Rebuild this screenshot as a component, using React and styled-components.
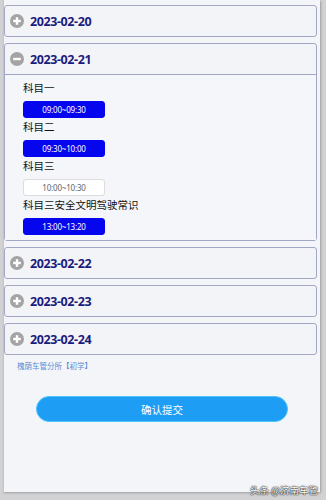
import styled, { createGlobalStyle } from "styled-components";

const days = [
  { date: "2023-02-20", open: false },
  {
    date: "2023-02-21",
    open: true,
    subjects: [
      { name: "科目一", time: "09:00~09:30", picked: true },
      { name: "科目二", time: "09:30~10:00", picked: true },
      { name: "科目三", time: "10:00~10:30", picked: false },
      { name: "科目三安全文明驾驶常识", time: "13:00~13:20", picked: true },
    ],
  },
  { date: "2023-02-22", open: false },
  { date: "2023-02-23", open: false },
  { date: "2023-02-24", open: false },
];

export default function App() {
  return (
    <>
      <GlobalStyle />
      <Panel>
        <DayList>
          {days.map((day) => (
            <Day key={day.date}>
              <DayHeader open={day.open}>
                <ToggleIcon open={day.open} />
                <DateText>{day.date}</DateText>
              </DayHeader>
              {day.open && (
                <DayBody>
                  {day.subjects.map((s) => (
                    <Subject key={s.name}>
                      <SubjectName>{s.name}</SubjectName>
                      <Slot picked={s.picked}>{s.time}</Slot>
                    </Subject>
                  ))}
                </DayBody>
              )}
            </Day>
          ))}
        </DayList>
        <Office>槐荫车管分所【初学】</Office>
        <Submit>确认提交</Submit>
      </Panel>
      <Watermark>头条 @济南车管</Watermark>
    </>
  );
}

function ToggleIcon({ open }) {
  return (
    <Icon viewBox="0 0 14 14">
      <circle cx="7" cy="7" r="7" fill="#a4a4a4" />
      <path d="M3.2 7h7.6" stroke="#fff" strokeWidth="2.4" />
      {!open && <path d="M7 3.2v7.6" stroke="#fff" strokeWidth="2.4" />}
    </Icon>
  );
}

const GlobalStyle = createGlobalStyle`
  html, body {
    margin: 0;
    background: #d2d2d4;
    font-family: "Noto Sans", "Noto Sans CJK SC", sans-serif;
  }
  body {
    width: 326px;
    height: 500px;
    overflow: hidden;
  }
`;

const Panel = styled.div`
  position: relative;
  margin-left: 3px;
  width: 317px;
  height: 492px;
  background: #f4f5f8;
  border-left: 1px solid #c4c6cc;
  box-sizing: border-box;
  box-shadow: 1px 1px 2px rgba(0, 0, 0, 0.25);
`;

const DayList = styled.div`
  display: flex;
  flex-direction: column;
  gap: 6px;
  padding: 5px 3px 0 0;
`;

const Day = styled.div`
  border: 1px solid #a2a7c6;
  border-radius: 3px;
  background: #f3f4f8;
`;

const DayHeader = styled.div`
  display: flex;
  align-items: center;
  gap: 6px;
  height: 30px;
  padding-left: 5px;
  border-bottom: ${(p) => (p.open ? "1px solid #a2a7c6" : "none")};
`;

const Icon = styled.svg`
  width: 14px;
  height: 14px;
`;

const DateText = styled.span`
  font-size: 12.5px;
  font-weight: 700;
  color: #1b1c7c;
  letter-spacing: -0.4px;
`;

const DayBody = styled.div`
  padding: 4px 0 5px 18px;
  background: #f5f6f9;
`;

const Subject = styled.div`
  display: flex;
  flex-direction: column;
  align-items: flex-start;
  height: 39px;
`;

const SubjectName = styled.div`
  font-family: "Noto Sans CJK SC", sans-serif;
  font-size: 10.5px;
  line-height: 18px;
  color: #111;
  margin-bottom: 4px;
`;

const Slot = styled.div`
  width: 82px;
  height: 17px;
  box-sizing: border-box;
  border-radius: 3px;
  font-size: 8px;
  line-height: 15px;
  text-align: center;
  letter-spacing: -0.2px;
  background: ${(p) => (p.picked ? "#0505ee" : "#ffffff")};
  color: ${(p) => (p.picked ? "#ffffff" : "#666")};
  border: 1px solid ${(p) => (p.picked ? "#0505ee" : "#dcdcdc")};
`;

const Office = styled.div`
  margin: 6px 0 0 13px;
  font-family: "Noto Sans CJK SC", sans-serif;
  font-size: 7.5px;
  line-height: 10px;
  color: #5a8bd6;
`;

const Submit = styled.button`
  display: block;
  margin: 25px auto 0;
  width: 252px;
  height: 26px;
  border: 1px solid #4ec4fb;
  border-radius: 13px;
  background: #1d9ef4;
  color: #fff;
  font-family: "Noto Sans CJK SC", sans-serif;
  font-size: 10.5px;
  padding: 0;
`;

const Watermark = styled.div`
  position: absolute;
  right: 8px;
  top: 483px;
  font-family: "Noto Sans CJK SC", sans-serif;
  font-size: 9.5px;
  color: #ffffff;
  text-shadow: 0 0 1px #222, 0 0 1px #222, 0 0 2px #444;
`;
